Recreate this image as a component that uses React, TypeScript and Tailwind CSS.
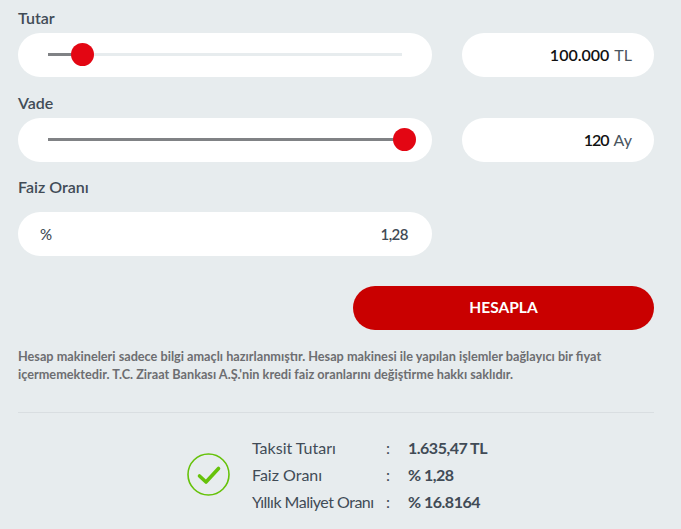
const font = "font-['Lato','Noto_Sans',sans-serif]";

function Slider({ percent, thumb }: { percent: number; thumb: number }) {
  return (
    <div className="flex h-11 w-[414px] items-center rounded-full bg-white px-[30px]">
      <div className="relative -mt-[1px] h-[3px] w-full bg-[#e7ecee]">
        <div className="h-full bg-[#808285]" style={{ width: `${percent}%` }} />
        <div
          className="absolute top-[-10px] size-[23px] rounded-full bg-[#e30613]"
          style={{ left: thumb }}
        />
      </div>
    </div>
  );
}

function ValuePill({ value, unit, valueClass = "" }: { value: string; unit: string; valueClass?: string }) {
  return (
    <div className="flex h-11 w-[192px] items-center justify-end gap-[5px] rounded-full bg-white px-[22px] text-[16px]">
      <span className={`font-semibold text-[#111] ${valueClass}`}>{value}</span>
      <span className="text-[#4a5560]">{unit}</span>
    </div>
  );
}

function ResultRow({ label, value, labelClass = "" }: { label: string; value: string; labelClass?: string }) {
  return (
    <div className="flex h-[27px] items-center text-[16px] text-[#414b56]">
      <span className={`w-[134px] ${labelClass}`}>{label}</span>
      <span className="w-[22px]">:</span>
      <span className="font-bold tracking-[-0.5px]">{value}</span>
    </div>
  );
}

export default function App() {
  return (
    <div className={`${font} h-[529px] w-[681px] overflow-hidden bg-[#e7ecee] pl-[18px] pr-[27px] text-[#414b56]`}>
      <div className="flex h-[33px] items-center pt-[2px] text-[16px] font-semibold">Tutar</div>
      <div className="flex gap-[30px]">
        <Slider percent={9.6} thumb={23} />
        <ValuePill value="100.000" unit="TL" />
      </div>
      <div className="flex h-[41px] items-center pt-[11px] text-[16px] font-semibold">Vade</div>
      <div className="flex gap-[30px]">
        <Slider percent={100} thumb={345} />
        <ValuePill value="120" unit="Ay" valueClass="tracking-[-1px]" />
      </div>
      <div className="flex h-[50px] items-center text-[16px] font-semibold">Faiz Oranı</div>
      <div className="flex h-11 w-[414px] items-center justify-between rounded-full bg-white pl-[22px] pr-[24px] text-[15px] font-semibold">
        <span className="font-medium">%</span>
        <span className="tracking-[-0.5px]">1,28</span>
      </div>
      <div className="mt-[30px] flex justify-end">
        <button className="h-11 w-[301px] rounded-full bg-[#c90000] text-[15.5px] font-bold text-white">HESAPLA</button>
      </div>
      <p className="mt-[17px] text-[12.7px] font-bold leading-[18px] text-[#6d6e71]">
        Hesap makineleri sadece bilgi amaçlı hazırlanmıştır. Hesap makinesi ile yapılan işlemler bağlayıcı bir fiyat
        <br />
        içermemektedir. T.C. Ziraat Bankası A.Ş.'nin kredi faiz oranlarını değiştirme hakkı saklıdır.
      </p>
      <div className="mt-[29px] border-t border-[#d9dee1]" />
      <div className="mt-[21px] flex items-center pl-[169px]">
        <svg width="43" height="43" viewBox="0 0 43 43" fill="none" className="mr-[22px]">
          <circle cx="21.5" cy="21.5" r="20.5" stroke="#66c20a" strokeWidth="1.6" />
          <path d="M12.5 23l6.5 6 12.5-13.5" stroke="#66c20a" strokeWidth="3.6" strokeLinecap="round" strokeLinejoin="round" />
        </svg>
        <div>
          <ResultRow label="Taksit Tutarı" value="1.635,47 TL" />
          <ResultRow label="Faiz Oranı" value="% 1,28" />
          <ResultRow label="Yıllık Maliyet Oranı" value="% 16.8164" labelClass="tracking-[-0.5px]" />
        </div>
      </div>
    </div>
  );
}
